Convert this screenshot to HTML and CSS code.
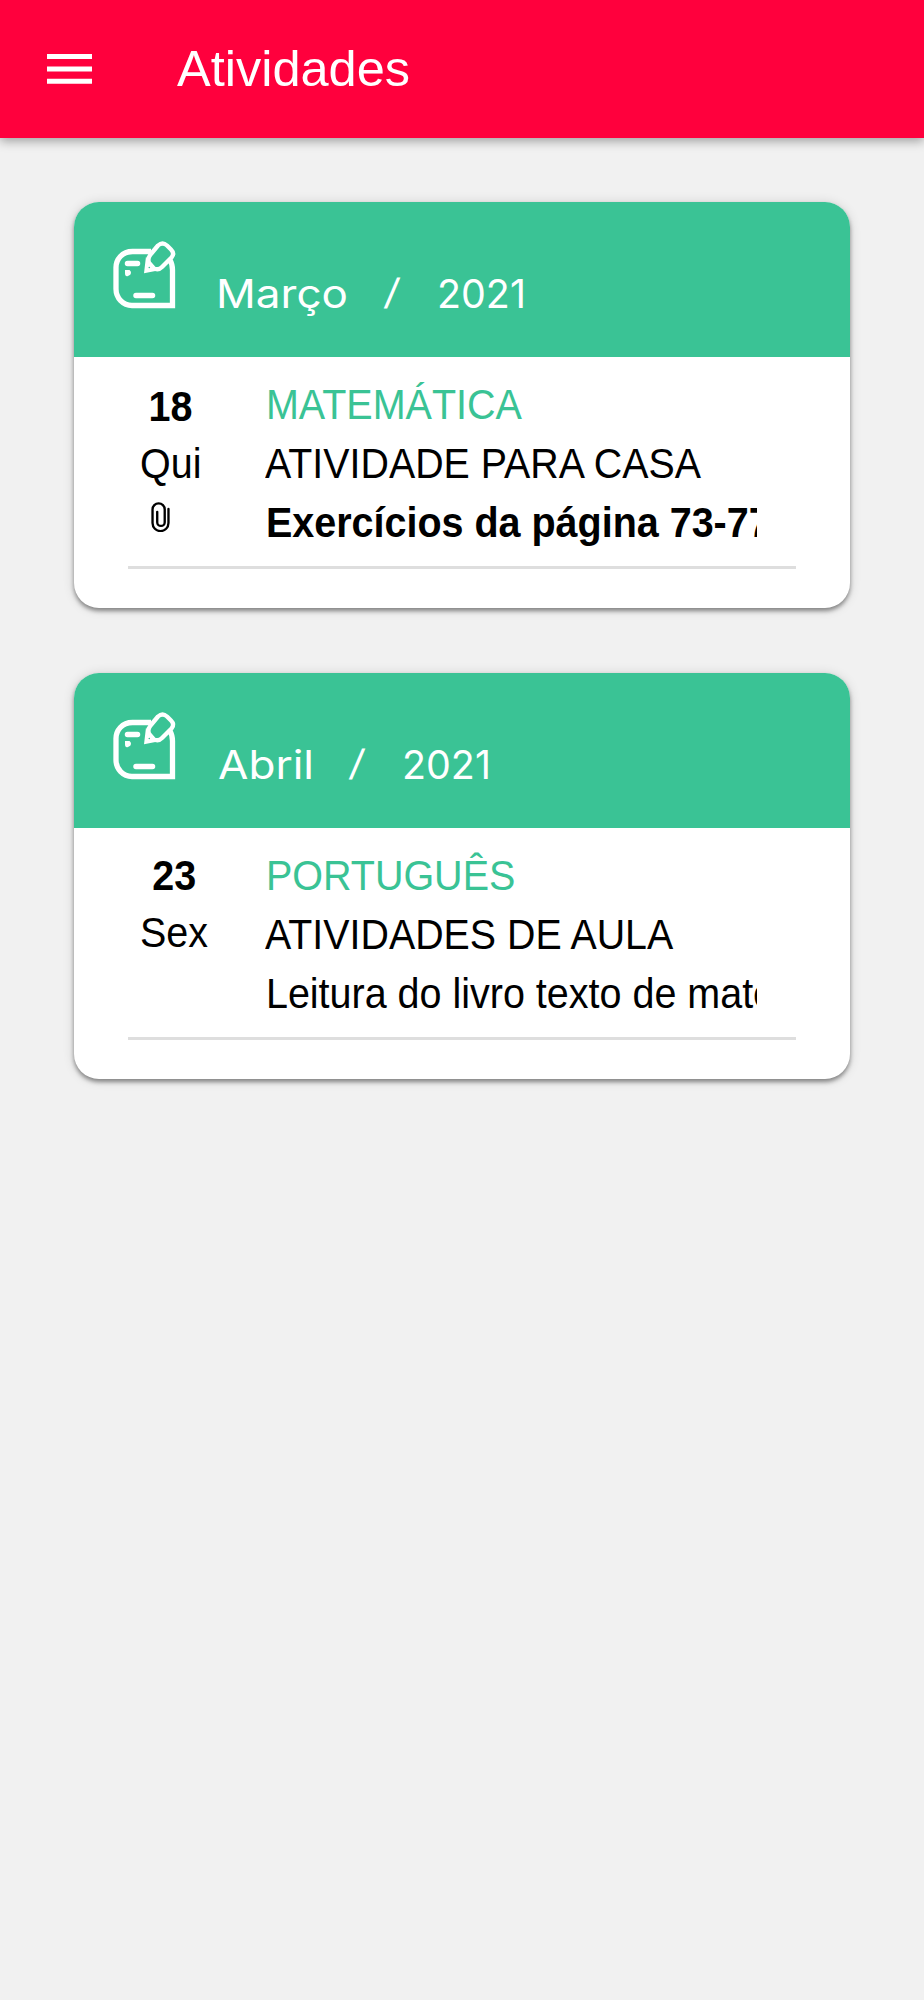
FILE: index.html
```html
<!DOCTYPE html>
<html lang="pt-BR">
<head>
  <meta charset="UTF-8">
  <title>Atividades</title>
  <link rel="stylesheet" href="styles.css">
</head>
<body>

  <svg class="symbols" width="0" height="0">
    <symbol id="edit" viewBox="0 0 90 90">
      <path d="M51 21.500H32.500C22 21.500 16 29.500 16 37.500V59C16 68 23 75.500 32 75.500H72.500V40q0-6-3-11" fill="none" stroke="#fff" stroke-width="5.300"/>
      <path d="M27.500 33.500h10M36 65.500h16.500" stroke="#fff" stroke-width="5.500" stroke-linecap="round"/>
      <path d="M25 40h4.500q1.500 1 1.500 3t-3 3-3-3z" fill="#fff"/>
      <path d="M58 15.500q4.500-4 9 0l4 4q4 4 .500 8L62 37q-4 4-8.500 1l-3.500-4q-3.500-4 .500-9.500z" fill="#3ac395" stroke="#fff" stroke-width="4.300" stroke-linejoin="round"/>
      <path d="M46 26.500 44 43.300 58 40.500 49.500 34z" fill="#fff"/>
      <circle cx="49.300" cy="37.500" r=".8" fill="#3ac395"/>
    </symbol>
    <symbol id="clip" viewBox="0 0 20 32">
      <path d="M18.500 7.500v15a8.500 8.500 0 0 1-17 0V8a6.500 6.500 0 0 1 13 0v13.500a4 4 0 0 1-8 0V10.500" fill="none" stroke="#000" stroke-width="2.500" stroke-linecap="round"/>
    </symbol>
  </svg>

  <header class="toolbar">
    <svg class="menu" viewBox="0 0 45 30">
      <path d="M0 2.500h45M0 15h45M0 27.300h45" stroke="#fff" stroke-width="5"/>
    </svg>
    <h1>Atividades</h1>
  </header>

  <main class="container">
    <section class="card">
      <div class="card-header">
        <svg class="edit-icon"><use href="#edit"/></svg>
        <h2>
          <span class="month marco">Março</span>
          <span class="slash">/</span>
          <span class="year">2021</span>
        </h2>
      </div>
      <div class="card-body">
        <div class="activity">
          <div class="date">
            <span class="day">18</span>
            <span class="weekday">Qui</span>
            <svg class="clip"><use href="#clip"/></svg>
          </div>
          <div class="info">
            <p class="subject">MATEMÁTICA</p>
            <p class="type">ATIVIDADE PARA CASA</p>
            <p class="unread">Exercícios da página 73-77</p>
          </div>
        </div>
      </div>
    </section>

    <section class="card">
      <div class="card-header">
        <svg class="edit-icon"><use href="#edit"/></svg>
        <h2>
          <span class="month abril">Abril</span>
          <span class="slash">/</span>
          <span class="year">2021</span>
        </h2>
      </div>
      <div class="card-body">
        <div class="activity">
          <div class="date no-clip">
            <span class="day">23</span>
            <span class="weekday">Sex</span>
          </div>
          <div class="info">
            <p class="subject">PORTUGUÊS</p>
            <p class="type">ATIVIDADES DE AULA</p>
            <p>Leitura do livro texto de matemática</p>
          </div>
        </div>
      </div>
    </section>
  </main>

</body>
</html>
```
FILE: styles.css
```css
* {
  box-sizing: border-box;
}

body {
  margin: 0;
  min-height: 2000px;
  background-color: #f1f1f1;
  color: #000;
  font-family: "Liberation Sans", Arial, sans-serif;
}

h1, h2, p {
  margin: 0;
  font-weight: normal;
}

.symbols {
  display: block;
}

.toolbar {
  display: flex;
  align-items: center;
  height: 138px;
  padding-left: 47px;
  background-color: #ff003d;
  color: #fff;
  box-shadow: 0 3px 10px rgba(0,0,0,0.35);
}

.menu {
  width: 45px;
  height: 30px;
}

.toolbar h1 {
  margin-left: 85px;
  font-size: 50.500px;
  line-height: 58px;
}

.container {
  display: flex;
  flex-direction: column;
  gap: 64.500px;
  padding: 64px 74px;
}

.card {
  height: 406px;
  border-radius: 25px;
  background: #fff;
  overflow: hidden;
  box-shadow: 0 3px 4px rgba(0,0,0,0.4), 0 1px 12px rgba(0,0,0,0.14);
}

.card-header {
  display: flex;
  height: 155px;
  padding: 28px 0 0 26px;
  background-color: #3ac395;
  color: #fff;
}

.edit-icon {
  width: 90px;
  height: 90px;
}

.card-header h2 {
  display: flex;
  padding: 39px 0 0 26px;
  font-size: 42px;
  line-height: 50px;
}

.card-header span {
  transform-origin: left;
}

.month {
  font-family: Inter, sans-serif;
  font-size: 39px;
  transform: scaleX(1.13);
}

.marco {
  width: 167px;
}

.abril {
  width: 130px;
  margin-left: 2px;
}

.slash {
  width: 54px;
  transform: skewX(-9deg);
}

.year {
  font-family: Inter, sans-serif;
  font-size: 39px;
  transform: scaleX(1.01);
}

.card-body {
  padding: 18px 54px 0;
}

.activity {
  display: flex;
  height: 194px;
  border-bottom: 3px solid #dedede;
}

.date {
  display: flex;
  flex-direction: column;
  width: 137px;
  padding: 3px 0 0 12px;
  font-size: 42px;
  line-height: 57px;
}

.date.no-clip {
  padding-top: 1px;
}

.date span {
  transform: scaleX(0.94);
  transform-origin: left;
}

.day {
  padding-left: 9px;
  font-weight: bold;
}

.no-clip .day {
  padding-left: 13px;
}

.clip {
  width: 19px;
  height: 30px;
  margin: 10px 0 0 11px;
}

.info {
  width: 492px;
  overflow: hidden;
  font-size: 42px;
  line-height: 59px;
  white-space: nowrap;
}

.info p {
  padding-left: 1px;
  transform: scaleX(0.94);
  transform-origin: left;
}

.info .type {
  padding-left: 0;
  transform: scaleX(0.937);
}

.subject {
  color: #3ac395;
}

.unread {
  font-weight: bold;
}
```
